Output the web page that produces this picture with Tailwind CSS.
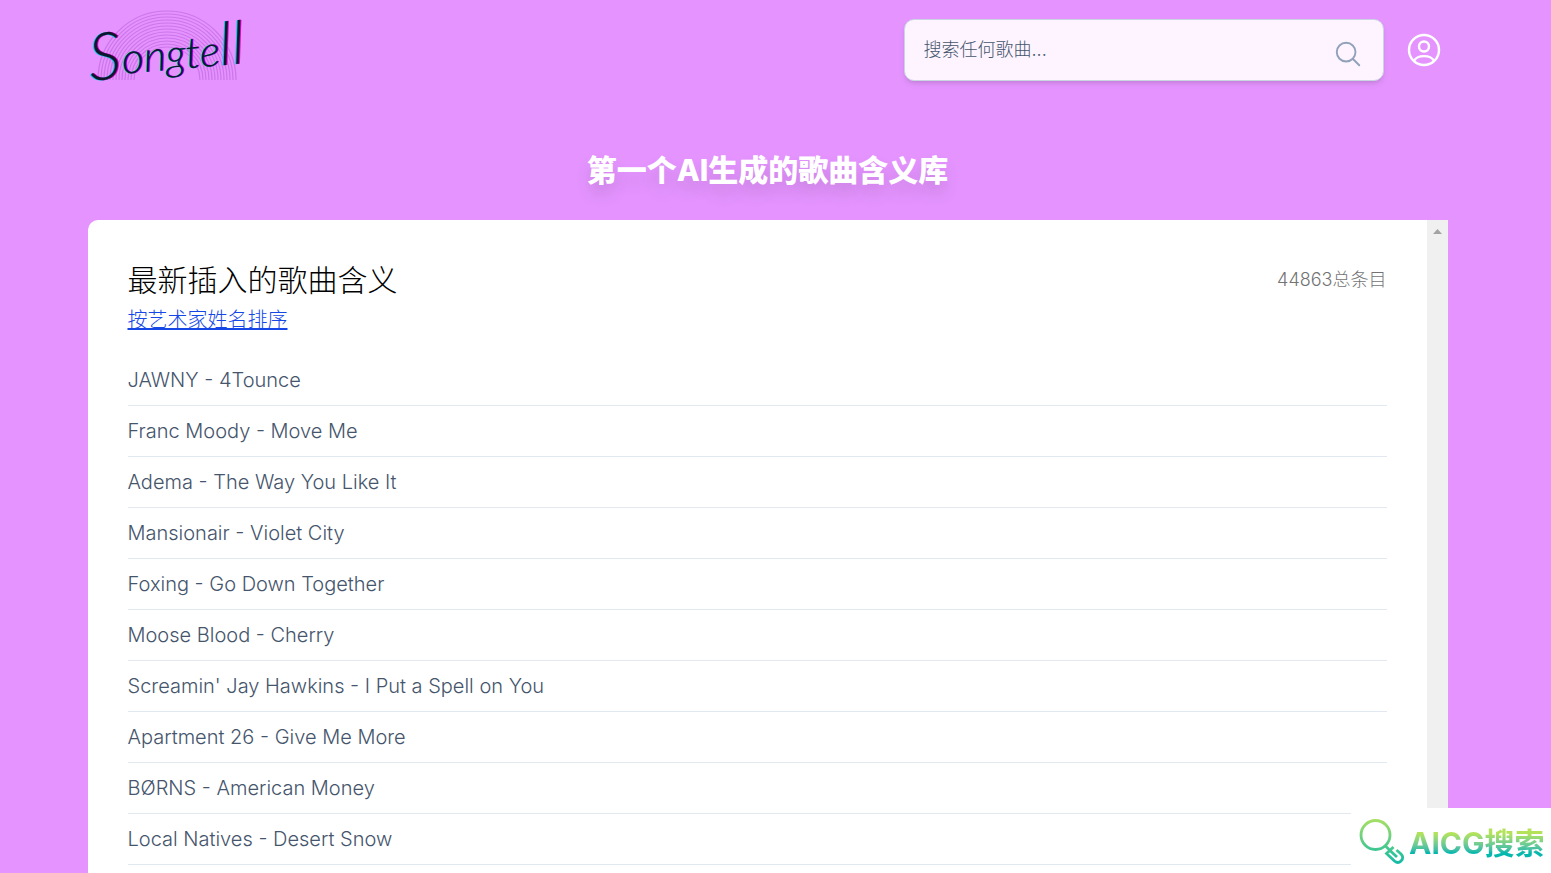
<!DOCTYPE html>
<html lang="zh-CN">
<head>
  <meta charset="UTF-8">
  <meta name="viewport" content="width=device-width, initial-scale=1.0">
  <title>Songtell</title>
  <script src="https://cdn.jsdelivr.net/npm/@tailwindcss/browser@4"></script>
</head>
<body class="bg-[#e594ff] h-screen overflow-hidden font-[Inter,'Noto_Sans_CJK_SC',sans-serif] font-light">
  <div class="h-full pr-4">
    <div class="max-w-[1440px] h-full mx-auto px-10 flex flex-col">
      <header class="h-[100px] shrink-0 flex items-center justify-between pr-2">
        <a href="#" aria-label="Songtell">
          <svg class="w-40 h-20 overflow-visible" viewBox="0 0 160 80">
            <!-- record grooves behind the name -->
            <g fill="none" stroke="#c86fe6" stroke-width="1.200" opacity=".8">
              <path d="M10 70A69 69 0 0 1 148 70" />
              <path d="M13 70A66 66 0 0 1 145 70" />
              <path d="M16 70A63 63 0 0 1 142 70" />
              <path d="M19 70A60 60 0 0 1 139 70" />
              <path d="M22 70A57 57 0 0 1 136 70" />
              <path d="M25 70A54 54 0 0 1 133 70" />
              <path d="M28 70A51 51 0 0 1 130 70" />
              <path d="M31 70A48 48 0 0 1 127 70" />
              <path d="M34 70A45 45 0 0 1 124 70" />
              <path d="M37 70A42 42 0 0 1 121 70" />
              <path d="M40 70A39 39 0 0 1 118 70" />
              <path d="M43 70A36 36 0 0 1 115 70" />
              <path d="M46 70A33 33 0 0 1 112 70" />
            </g>
            <text x="1" y="64" transform="rotate(-5 80 50)" class="font-[Lato,cursive] italic font-light fill-[#10152e] [text-shadow:-1px_0_#00c8e0,1px_0_#e800d8]"><tspan font-size="66">S</tspan><tspan font-size="43" dy="-4">ongte</tspan><tspan font-size="60">ll</tspan></text>
          </svg>
        </a>
        <div class="flex items-center gap-6">
          <form class="w-[480px] h-[62px] flex items-center bg-fuchsia-50 border border-slate-300 rounded-[10px] shadow-md pl-[19px] pr-5">
            <input type="text" aria-label="搜索任何歌曲" placeholder="搜索任何歌曲..." class="flex-1 min-w-0 h-full pb-0.5 bg-transparent text-[18px] placeholder:text-slate-600 focus:outline-none">
            <button type="submit" aria-label="搜索" class="pt-2">
              <svg class="size-[30px] text-slate-400" viewBox="0 0 24 24" fill="none" stroke="currentColor" stroke-width="1.5" stroke-linecap="round" stroke-linejoin="round">
                <path d="M21 21l-5.197-5.197m0 0A7.5 7.5 0 105.196 5.196a7.5 7.5 0 0010.607 10.607z" />
              </svg>
            </button>
          </form>
          <a href="#" aria-label="账户">
            <svg class="size-8 overflow-visible" viewBox="0 0 32 32" fill="none" stroke="#fff" stroke-width="2.400">
              <circle cx="16" cy="16" r="15" />
              <circle cx="16" cy="12.500" r="5" />
              <path d="M6 27C9 20.500 23 20.500 26 27" />
            </svg>
          </a>
        </div>
      </header>
      <h1 class="h-[120px] shrink-0 pt-12 text-center text-[30px] leading-[45px] font-extrabold text-white [text-shadow:0_10px_16px_rgb(0_0_0/0.12)]">第一个AI生成的歌曲含义库</h1>
      <main class="flex-1 min-h-0 flex bg-white rounded-tl-[10px] overflow-hidden">
        <div class="flex-1 p-10">
          <div class="flex justify-between items-start mb-[5px]">
            <h2 class="text-[30px] leading-10 text-black">最新插入的歌曲含义</h2>
            <p class="text-[18px] leading-10 text-neutral-500">44863总条目</p>
          </div>
          <a href="#" class="block w-fit text-[20px] leading-[30px] text-blue-700 underline">按艺术家姓名排序</a>
          <ul class="mt-5 text-[20px] leading-[30px] text-slate-600">
            <li class="border-b border-slate-200"><a href="#" class="block py-[10px]">JAWNY - 4Tounce</a></li>
            <li class="border-b border-slate-200"><a href="#" class="block py-[10px]">Franc Moody - Move Me</a></li>
            <li class="border-b border-slate-200"><a href="#" class="block py-[10px]">Adema - The Way You Like It</a></li>
            <li class="border-b border-slate-200"><a href="#" class="block py-[10px]">Mansionair - Violet City</a></li>
            <li class="border-b border-slate-200"><a href="#" class="block py-[10px]">Foxing - Go Down Together</a></li>
            <li class="border-b border-slate-200"><a href="#" class="block py-[10px]">Moose Blood - Cherry</a></li>
            <li class="border-b border-slate-200"><a href="#" class="block py-[10px]">Screamin' Jay Hawkins - I Put a Spell on You</a></li>
            <li class="border-b border-slate-200"><a href="#" class="block py-[10px]">Apartment 26 - Give Me More</a></li>
            <li class="border-b border-slate-200"><a href="#" class="block py-[10px]">BØRNS - American Money</a></li>
            <li class="border-b border-slate-200"><a href="#" class="block py-[10px]">Local Natives - Desert Snow</a></li>
          </ul>
        </div>
        <!-- scroll track -->
        <div class="w-[21px] shrink-0 bg-[#f0f0f0] pt-[9px]" aria-hidden="true">
          <svg class="w-[9px] h-[5px] mx-auto" viewBox="0 0 9 5"><path d="M0 5L4.500 0L9 5z" fill="#a3a3a3" /></svg>
        </div>
      </main>
    </div>
  </div>

  <a href="#" class="fixed right-0 bottom-0 w-[200px] h-[65px] bg-white flex items-center pl-2 pt-1">
    <svg class="w-[50px] h-[48px] shrink-0" viewBox="0 0 50 48" fill="none">
      <defs>
        <linearGradient id="lens" x1="0" y1="0" x2="0" y2="48" gradientUnits="userSpaceOnUse">
          <stop offset="0" stop-color="#a8e063" />
          <stop offset="1" stop-color="#06b8ac" />
        </linearGradient>
      </defs>
      <g stroke="url(#lens)" stroke-width="2.800">
        <circle cx="16.500" cy="16" r="14.500" />
        <path d="M26 26.500L30 30.500M34.500 28L27.500 34.500L35.500 42Q39 45 42 42Q45.500 38.500 42 35L37.500 31M31.500 32L38 38" />
      </g>
    </svg>
    <span class="whitespace-nowrap text-[30px] leading-8 font-bold bg-linear-to-b from-[#b4e35a] from-20% to-[#05b8ad] to-80% bg-clip-text text-transparent">AICG搜索</span>
  </a>
</body>
</html>
